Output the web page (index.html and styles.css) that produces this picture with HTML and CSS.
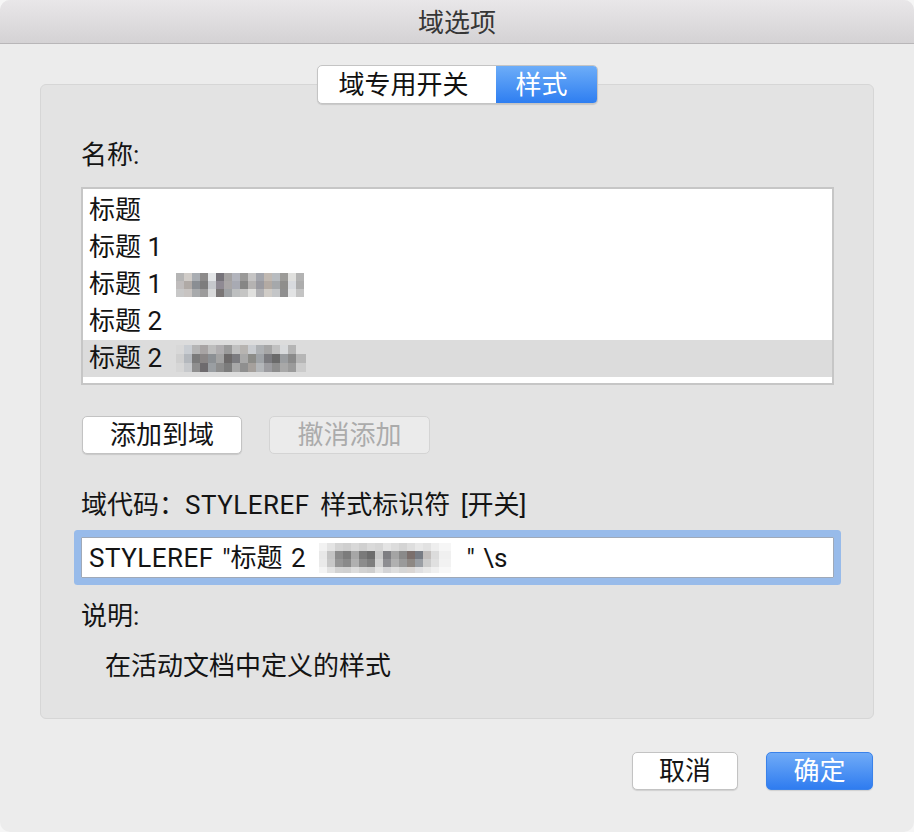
FILE: index.html
```html
<!DOCTYPE html>
<html lang="zh-CN">
<head>
<meta charset="utf-8">
<title>域选项</title>
<link rel="stylesheet" href="styles.css">
</head>
<body>
<div class="window">
  <div class="titlebar">域选项</div>
  <div class="content">
    <div class="segmented">
      <span class="seg seg-first">域专用开关</span>
      <span class="seg seg-active">样式</span>
    </div>
    <div class="groupbox">
      <div class="label">名称:</div>
      <div class="listbox">
        <div class="row">标题</div>
        <div class="row">标题 1</div>
        <div class="row">标题 1<span class="blur blur-a"></span></div>
        <div class="row">标题 2</div>
        <div class="row row-selected">标题 2<span class="blur blur-b"></span></div>
      </div>
      <div class="btn-row">
        <button class="btn btn-add">添加到域</button>
        <button class="btn btn-disabled" disabled>撤消添加</button>
      </div>
      <div class="label code-label">域代码：<span class="latin">STYLEREF</span> 样式标识符 [开关]</div>
      <div class="input"><span class="latin">STYLEREF</span> "标题 2<span class="blur blur-c"></span>" \s</div>
      <div class="label desc-label">说明:</div>
      <div class="desc">在活动文档中定义的样式</div>
    </div>
    <div class="footer">
      <button class="btn btn-cancel">取消</button>
      <button class="btn btn-primary">确定</button>
    </div>
  </div>
</div>
</body>
</html>
```

FILE: styles.css
```css
* { box-sizing: border-box; }
html, body { margin: 0; padding: 0; background: #f6f6f6; }
body {
  font-family: Roboto, "Noto Sans CJK SC", sans-serif;
  font-size: 26px;
  color: #141414;
}
.window {
  width: 914px;
  height: 832px;
  background: #ececec;
  border-radius: 10px;
  overflow: hidden;
  display: flex;
  flex-direction: column;
}
.titlebar {
  height: 44px;
  line-height: 46px;
  text-align: center;
  color: #363636;
  background: linear-gradient(#e9e7e9, #d4d2d4);
  border-bottom: 1px solid #b8b6b8;
}
.content {
  padding: 21px 40px 0 40px;
  display: flex;
  flex-direction: column;
}
.segmented {
  align-self: center;
  display: flex;
  height: 39px;
  margin-bottom: -20px;
  margin-left: 1px;
  position: relative;
  z-index: 1;
  border: 1px solid #c4c4c4;
  border-radius: 5px;
  overflow: hidden;
  background: #fff;
  box-shadow: 0 1px 1px rgba(0,0,0,0.12);
}
.seg {
  line-height: 38px;
  color: #111;
}
.seg-first { padding: 0 27px 0 20px; }
.seg-active {
  color: #fff;
  background: linear-gradient(#6dadf8, #2e7ef1);
  padding: 0 29px 0 20px;
}
.groupbox {
  background: #e3e3e3;
  border: 1px solid #d6d6d6;
  border-radius: 6px;
  padding: 55px 39px 37px 40px;
}
.label {
  line-height: 31px;
  height: 30px;
  word-spacing: 4px;
}
.latin { letter-spacing: 0.5px; }
.listbox {
  margin-top: 17px;
  height: 198px;
  background: #fff;
  border: 2px solid #c6c6c6;
  padding-top: 3px;
}
.row {
  height: 37px;
  line-height: 39px;
  padding-left: 6px;
  display: flex;
  align-items: center;
  white-space: pre;
}
.row-selected { background: #dcdcdc; }
.blur {
  display: inline-block;
  flex: none;
}
.blur-a {
  width: 128px;
  height: 24px;
  margin-left: 14px;
  background:
    linear-gradient(90deg, #b5b5b5 0 8px, #d0ccc8 8px 16px, #a9adb2 16px 24px, #8c8a8a 24px 32px, #e3e5e7 32px 40px, #76737a 40px 48px, #a4a2a2 48px 56px, #b2b4bc 56px 64px, #9a9998 64px 72px, #c5c4c4 72px 80px, #a3a5ac 80px 88px, #c1b9b2 88px 96px, #b8bcc0 96px 104px, #9c9b98 104px 112px, #e0e0de 112px 120px, #b3b3b3 120px 128px) 0 0 / 100% 8px no-repeat,
    linear-gradient(90deg, #bfbcbc 0 8px, #b0aaa6 8px 16px, #8a8e93 16px 24px, #7e7d7d 24px 32px, #c6c8cc 32px 40px, #8f8a93 40px 48px, #a9a6a6 48px 56px, #a8aab3 56px 64px, #868685 64px 72px, #b5b3b2 72px 80px, #9a9aa0 80px 88px, #b3aaa3 88px 96px, #a5a8ab 96px 104px, #8f8e8c 104px 112px, #d8dade 112px 120px, #adadad 120px 128px) 0 8px / 100% 8px no-repeat,
    linear-gradient(90deg, #c8c8c8 0 8px, #c8c4c2 8px 16px, #a8aaac 16px 24px, #9c9b9b 24px 32px, #d8d9da 32px 40px, #7a7676 40px 48px, #9fa2a5 48px 56px, #bdbfc0 56px 64px, #c5c5c4 64px 72px, #e0e0de 72px 80px, #b1b1b4 80px 88px, #d0ccc7 88px 96px, #c4c6c8 96px 104px, #8f8f8f 104px 112px, #e2e3e4 112px 120px, #c4c4c4 120px 128px) 0 16px / 100% 8px no-repeat;
}
.blur-b {
  width: 130px;
  height: 27px;
  margin-left: 14px;
  background:
    linear-gradient(90deg, #d8d8d8 0 8px, #c9cdd2 8px 16px, #b5b5b5 16px 24px, #a8a4a4 24px 32px, #bdbdbd 32px 40px, #b0aeb0 40px 48px, #9b9b9b 48px 56px, #c0c0c0 56px 64px, #b7b4b1 64px 72px, #c9ccd0 72px 80px, #aeb1b4 80px 88px, #a6a6a6 88px 96px, #c0c0c0 96px 104px, #d8dadc 104px 112px, #b5b5b5 112px 120px, #dcdcdc 120px 130px) 0 0 / 100% 9px no-repeat,
    linear-gradient(90deg, #cfcfcf 0 8px, #b4b8bd 8px 16px, #7b7b7b 16px 24px, #8a8686 24px 32px, #8c9094 32px 40px, #a3a3a3 40px 48px, #6d6a6a 48px 56px, #7c7c80 56px 64px, #a9a9a9 64px 72px, #8c8c88 72px 80px, #9fa3a7 80px 88px, #7b7b7f 88px 96px, #6a6a6a 96px 104px, #9a9da0 104px 112px, #8a8a8a 112px 120px, #b6b6b6 120px 130px) 0 9px / 100% 9px no-repeat,
    linear-gradient(90deg, #d6d6d6 0 8px, #c7c9cc 8px 16px, #8f8f8f 16px 24px, #6e6b6e 24px 32px, #9a9ea2 32px 40px, #8d8d8d 40px 48px, #7c7c7c 48px 56px, #a8a8a8 56px 64px, #8f8f8f 64px 72px, #a5a09c 72px 80px, #b3b6b9 80px 88px, #9c9ca0 88px 96px, #8d8d8d 96px 104px, #a8a8a8 104px 112px, #9b9b9b 112px 120px, #cbcbcb 120px 130px) 0 18px / 100% 9px no-repeat;
}
.btn-row {
  margin-top: 31px;
  margin-left: 1px;
  display: flex;
  gap: 27px;
}
.btn {
  font: inherit;
  height: 38px;
  line-height: 37px;
  padding: 0;
  border-radius: 5px;
  border: 1px solid #c3c3c3;
  background: #fff;
  color: #141414;
  box-shadow: 0 1px 1px rgba(0,0,0,0.12);
}
.btn-add { width: 160px; }
.btn-disabled {
  width: 161px;
  background: #ebebeb;
  border-color: #d4d4d4;
  color: #ababab;
  box-shadow: none;
}
.code-label { margin-top: 36px; }
.input {
  margin-top: 17px;
  height: 41px;
  line-height: 42px;
  background: #fff;
  border: 1px solid #9fa9b8;
  padding-left: 7px;
  display: flex;
  align-items: center;
  white-space: pre;
  word-spacing: 2px;
  box-shadow: 0 0 0 7px #98bbea;
  border-radius: 1px;
}
.blur-c {
  width: 132px;
  height: 30px;
  margin-left: 13px;
  margin-right: 16px;
  background:
    linear-gradient(90deg, #f2f2f2 0 8px, #e4e4e4 8px 16px, #d4d4d4 16px 24px, #cfcfcf 24px 32px, #d8d8d8 32px 40px, #d0d0d0 40px 48px, #dadada 48px 56px, #d6d6d6 56px 64px, #e4e4e4 64px 72px, #dcdcdc 72px 80px, #d4d4d4 80px 88px, #dedede 88px 96px, #e8e8e8 96px 104px, #e2e2e2 104px 112px, #eeeeee 112px 120px, #f6f6f6 120px 132px) 0 0 / 100% 8px no-repeat,
    linear-gradient(90deg, #e8e8e8 0 8px, #c4c4c4 8px 16px, #8c8c8c 16px 24px, #7c7c7c 24px 32px, #a6a6a6 32px 40px, #7a7a7a 40px 48px, #6c6c6c 48px 56px, #c8c8c8 56px 64px, #7e7e82 64px 72px, #a4a4a4 72px 80px, #8a8a8a 80px 88px, #7b6f6c 88px 96px, #787c84 96px 104px, #c2bebc 104px 112px, #dcdcdc 112px 120px, #f0f0f0 120px 132px) 0 8px / 100% 8px no-repeat,
    linear-gradient(90deg, #eaeaea 0 8px, #c8c8c8 8px 16px, #969696 16px 24px, #8a8a8a 24px 32px, #b0b0b0 32px 40px, #8c8c8c 40px 48px, #7e7e7e 48px 56px, #d2d2d2 56px 64px, #8e8e92 64px 72px, #b0b0b0 72px 80px, #9a9a9a 80px 88px, #8e8884 88px 96px, #9a9ea4 96px 104px, #cccccc 104px 112px, #e0e0e0 112px 120px, #f2f2f2 120px 132px) 0 16px / 100% 8px no-repeat,
    linear-gradient(90deg, #f4f4f4 0 8px, #e2e2e2 8px 16px, #d2d2d2 16px 24px, #d0d0d0 24px 32px, #dcdcdc 32px 40px, #d2d2d2 40px 48px, #cecece 48px 56px, #e4e4e4 56px 64px, #d4d4d6 64px 72px, #dedede 72px 80px, #d6d6d6 80px 88px, #dad6d4 88px 96px, #e0e0e2 96px 104px, #e8e8e8 104px 112px, #f0f0f0 112px 120px, #f8f8f8 120px 132px) 0 24px / 100% 6px no-repeat;
}
.desc-label { margin-top: 23px; }
.desc {
  margin-top: 20px;
  line-height: 31px;
  height: 30px;
  padding-left: 24px;
}
.footer {
  margin-top: 33px;
  margin-right: 1px;
  display: flex;
  justify-content: flex-end;
  gap: 28px;
}
.btn-cancel { width: 106px; }
.btn-primary {
  width: 107px;
  color: #fff;
  border-color: #3a82ea;
  background: linear-gradient(#70abf7, #2f7cf0);
}
```
